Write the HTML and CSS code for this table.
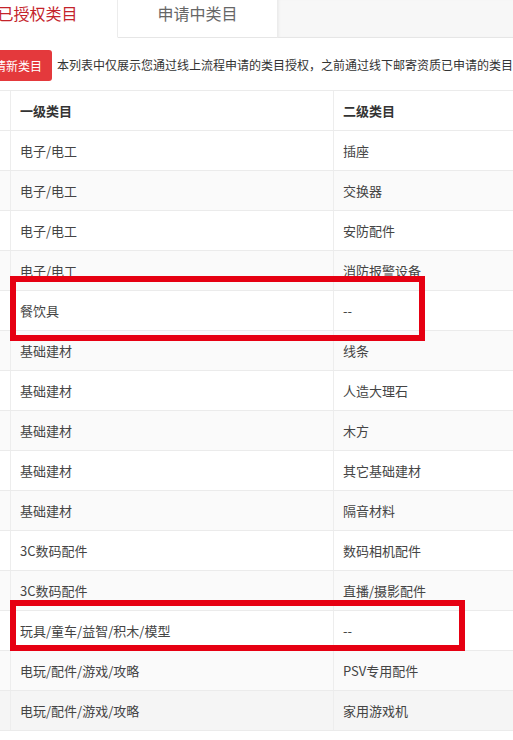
FILE: index.html
```html
<!DOCTYPE html>
<html lang="zh-CN">
<head>
<meta charset="utf-8">
<title>类目授权</title>
<link rel="stylesheet" href="styles.css">
</head>
<body>
<div class="page">
  <div class="tabs">
    <div class="tab active">已授权类目</div>
    <div class="tab">申请中类目</div>
    <div class="tab-rest"></div>
  </div>
  <div class="toolbar">
    <button class="btn">申请新类目</button>
    <span class="note">本列表中仅展示您通过线上流程申请的类目授权，之前通过线下邮寄资质已申请的类目不在此列表中展示</span>
  </div>
  <div class="table-wrap">
    <table class="grid">
      <thead>
        <tr><th class="c0"></th><th class="c1">一级类目</th><th class="c2">二级类目</th></tr>
      </thead>
      <tbody>
        <tr><td class="c0"></td><td>电子/电工</td><td>插座</td></tr>
        <tr class="alt"><td class="c0"></td><td>电子/电工</td><td>交换器</td></tr>
        <tr><td class="c0"></td><td>电子/电工</td><td>安防配件</td></tr>
        <tr class="alt"><td class="c0"></td><td>电子/电工</td><td>消防报警设备</td></tr>
        <tr><td class="c0"></td><td>餐饮具</td><td>--</td></tr>
        <tr class="alt"><td class="c0"></td><td>基础建材</td><td>线条</td></tr>
        <tr><td class="c0"></td><td>基础建材</td><td>人造大理石</td></tr>
        <tr class="alt"><td class="c0"></td><td>基础建材</td><td>木方</td></tr>
        <tr><td class="c0"></td><td>基础建材</td><td>其它基础建材</td></tr>
        <tr class="alt"><td class="c0"></td><td>基础建材</td><td>隔音材料</td></tr>
        <tr><td class="c0"></td><td>3C数码配件</td><td>数码相机配件</td></tr>
        <tr class="alt"><td class="c0"></td><td>3C数码配件</td><td>直播/摄影配件</td></tr>
        <tr><td class="c0"></td><td>玩具/童车/益智/积木/模型</td><td>--</td></tr>
        <tr class="alt"><td class="c0"></td><td>电玩/配件/游戏/攻略</td><td>PSV专用配件</td></tr>
        <tr class="hover"><td class="c0"></td><td>电玩/配件/游戏/攻略</td><td>家用游戏机</td></tr>
      </tbody>
    </table>
    <div class="mark mark-1"></div>
    <div class="mark mark-2"></div>
  </div>
</div>
</body>
</html>
```

FILE: styles.css
```css
html, body {
  margin: 0;
  padding: 0;
  background: #fff;
  overflow: hidden;
}
body {
  width: 513px;
  height: 740px;
  font-family: "Noto Sans CJK SC", "Noto Sans", sans-serif;
  color: #333;
}
.page {
  margin-left: -42px;
  width: 600px;
}
.tabs {
  display: flex;
  height: 38px;
}
.tab {
  width: 160px;
  flex: none;
  box-sizing: border-box;
  font-size: 16px;
  line-height: 26px;
  text-align: center;
  color: #666;
  background: #fff;
  border-right: 1px solid #ececec;
  border-bottom: 1px solid #e6e6e6;
}
.tab.active {
  color: #c4232b;
  border-bottom-color: #fff;
}
.tab-rest {
  flex: 1;
  background: #f7f7f7;
  border-bottom: 1px solid #e6e6e6;
  box-shadow: inset 2px 0 2px -1px #ececec;
}
.toolbar {
  display: flex;
  align-items: center;
  height: 52px;
  padding-left: 14px;
  box-sizing: border-box;
  white-space: nowrap;
  overflow: hidden;
}
.btn {
  flex: none;
  height: 31px;
  padding: 0 10px;
  border: 0;
  border-radius: 3px;
  background: #e4393c;
  color: #fff;
  font-family: inherit;
  font-size: 12px;
  margin-top: 3px;
}
.note {
  margin-left: 5px;
  font-size: 12px;
  color: #333;
}
.table-wrap {
  position: relative;
}
.grid {
  border-collapse: collapse;
  width: 600px;
  table-layout: fixed;
  font-size: 13px;
}
.grid th, .grid td {
  height: 39px;
  padding: 0 0 0 9px;
  text-align: left;
  border-top: 1px solid #ebebeb;
  border-bottom: 1px solid #ebebeb;
  border-left: 1px solid #ededed;
  color: #444;
  white-space: nowrap;
}
.grid th {
  font-weight: bold;
  color: #333;
}
.grid .c0 {
  width: 52px;
  padding: 0;
  border-left: 0;
}
.grid .c1 {
  width: 313px;
}
.grid tr.alt td {
  background: #fafafa;
}
.grid tr.hover td {
  background: #f5f5f5;
}
.mark {
  position: absolute;
  border: 6px solid #e60012;
  box-sizing: border-box;
}
.mark-1 {
  left: 52px;
  top: 186px;
  width: 415px;
  height: 65px;
}
.mark-2 {
  left: 52px;
  top: 510px;
  width: 455px;
  height: 51px;
}
```
